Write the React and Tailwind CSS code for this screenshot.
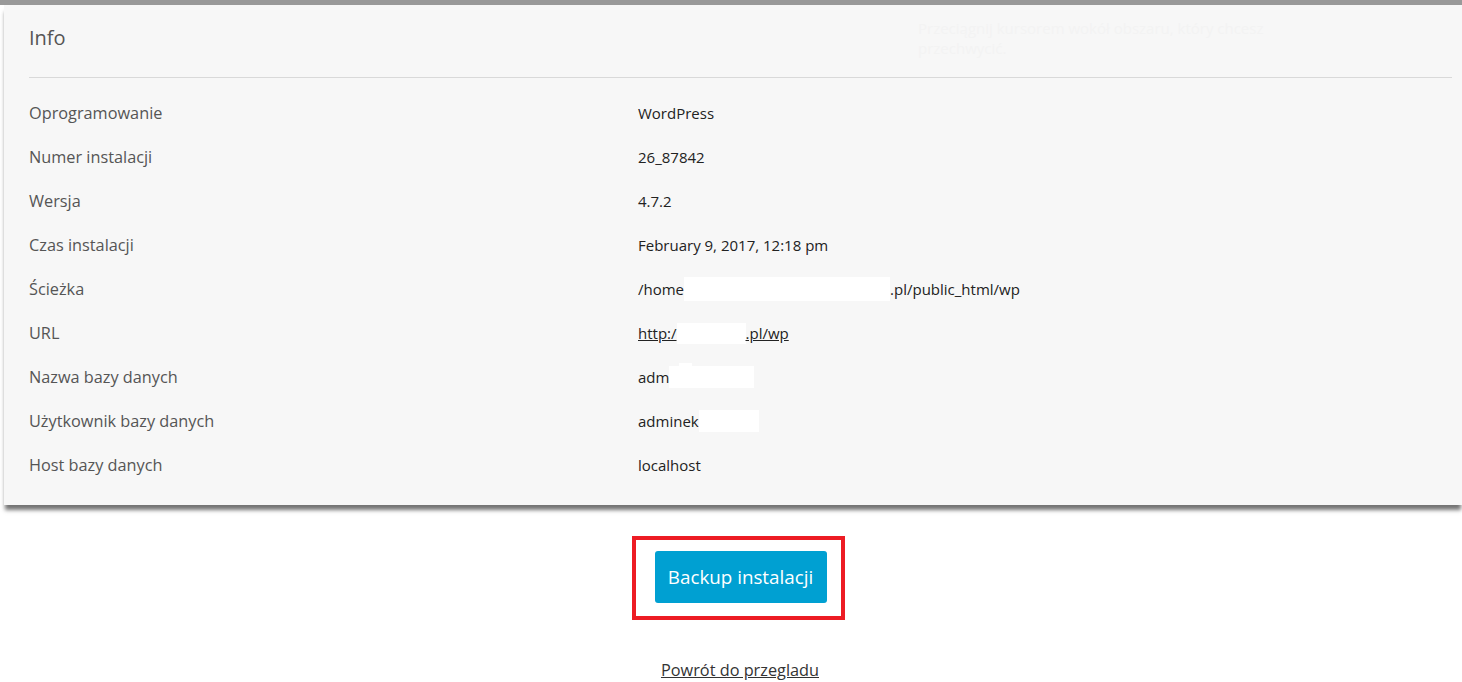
import React from 'react';

const rows = [
  { label: 'Oprogramowanie', value: <span>WordPress</span> },
  { label: 'Numer instalacji', value: <span>26_87842</span> },
  { label: 'Wersja', value: <span>4.7.2</span> },
  { label: 'Czas instalacji', value: <span>February 9, 2017, 12:18 pm</span> },
  {
    label: 'Ścieżka',
    value: (
      <span className="flex items-center">
        /home<span className="inline-block w-[206px] h-[24px] bg-white"></span>.pl/public_html/wp
      </span>
    ),
  },
  {
    label: 'URL',
    value: (
      <span className="flex items-center underline">
        http:/<span className="inline-block w-[69px] h-[21px] bg-white"></span>.pl/wp
      </span>
    ),
  },
  {
    label: 'Nazwa bazy danych',
    value: (
      <span className="flex items-center">
        adm<span className="relative inline-block w-[85px] h-[22px] bg-white">
          <span className="absolute left-[10px] top-[-3px] w-[13px] h-[4px] bg-white"></span>
        </span>
      </span>
    ),
  },
  {
    label: 'Użytkownik bazy danych',
    value: (
      <span className="flex items-center">
        adminek<span className="inline-block w-[60px] h-[22px] bg-white"></span>
      </span>
    ),
  },
  { label: 'Host bazy danych', value: <span>localhost</span> },
];

export default function App() {
  return (
    <div className="w-full min-h-[682px] bg-white font-['Open_Sans',sans-serif] overflow-hidden">
      <div className="h-[5px] bg-[#999999]"></div>
      <div className="ml-[4px] bg-[#f7f7f7] shadow-[0_6px_4px_-1px_rgba(0,0,0,0.55)] pl-[25px] pr-[10px] pt-[19px] pb-[18px] relative">
        <div className="absolute left-[914px] top-[13px] text-[15px] leading-[20px] text-[#f3f3f3] w-[380px]">
          Przeciągnij kursorem wokół obszaru, który chcesz przechwycić.
        </div>
        <h2 className="text-[20px] leading-[28px] text-[#555555]">Info</h2>
        <div className="mt-[25px] h-px bg-[#d9d9d9]"></div>
        <div className="mt-[13px] flex flex-col">
          {rows.map((r) => (
            <div key={r.label} className="flex items-center h-[44px]">
              <div className="w-[609px] text-[16.3px] text-[#555555]">{r.label}</div>
              <div className="text-[15px] text-[#222222]">{r.value}</div>
            </div>
          ))}
        </div>
      </div>
      <div className="flex flex-col items-center pl-[14px] pt-[31px]">
        <div className="border-[4px] border-[#ed1c24] pl-[19px] pr-[14px] pt-[11px] pb-[13px]">
          <button className="w-[172px] h-[52px] rounded-[3px] bg-[#00a0d2] text-white text-[18.8px]">
            Backup instalacji
          </button>
        </div>
        <a href="#" className="mt-[38px] pl-[4px] text-[16.3px] text-[#333333] underline">
          Powrót do przegladu
        </a>
      </div>
    </div>
  );
}
